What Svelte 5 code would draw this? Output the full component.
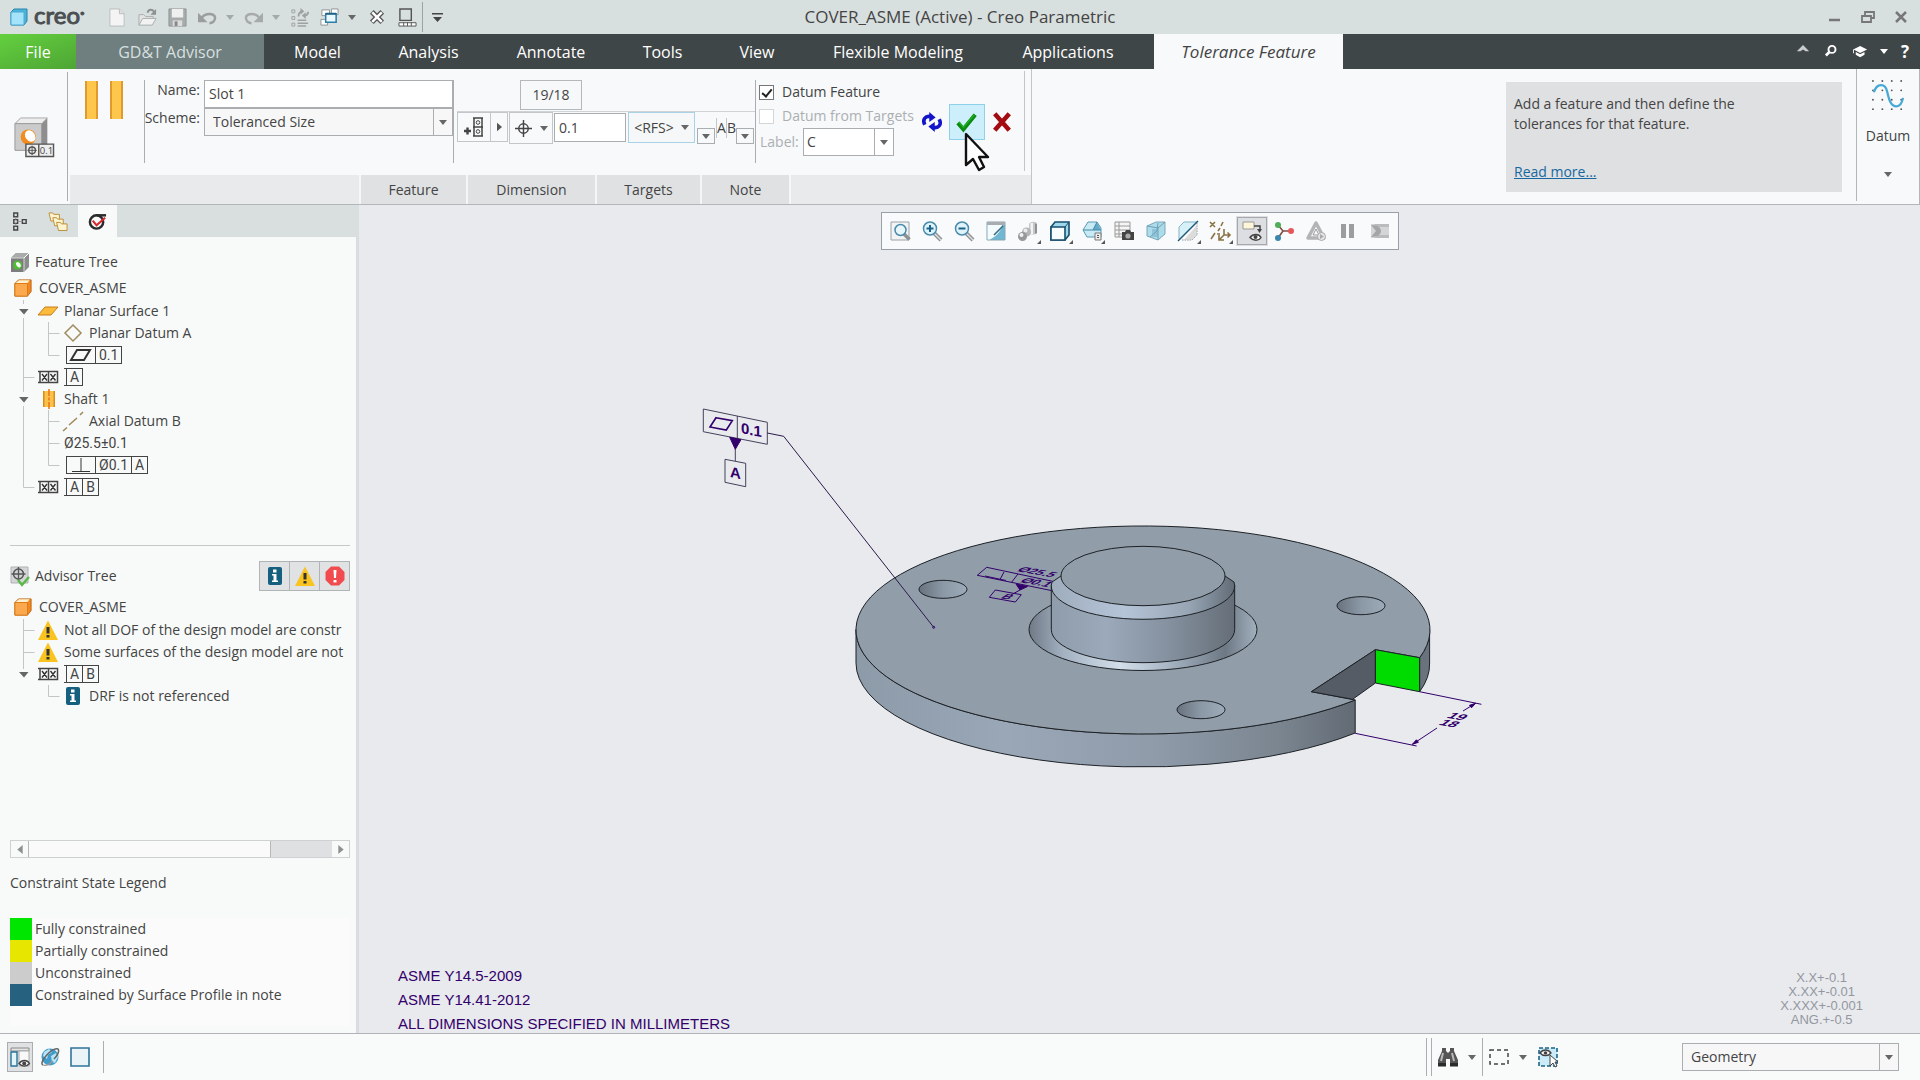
<script>
  let featureName = $state('Slot 1');
  let tolerance = $state('0.1');
  let datumFeature = $state(true);
  let fromTargets = $state(false);

  const tabs = ['Model', 'Analysis', 'Annotate', 'Tools', 'View', 'Flexible Modeling', 'Applications'];
  const subTabs = ['Feature', 'Dimension', 'Targets', 'Note'];

  // guides: v = line, t = tee, l = corner, e = expander, x = last expander, blank = nothing
  const featureRows = [
    { guides: ['e'], icon: 'plane', text: 'Planar Surface 1' },
    { guides: ['v', 't'], icon: 'diamond', text: 'Planar Datum A' },
    { guides: ['v', 'l'], frame: ['flat', '0.1'] },
    { guides: ['t'], icon: 'drf', datums: ['A'] },
    { guides: ['e'], icon: 'shaft', text: 'Shaft 1' },
    { guides: ['v', 't'], icon: 'axis', text: 'Axial Datum B' },
    { guides: ['v', 't'], plain: '25.5±0.1' },
    { guides: ['v', 'l'], frame: ['perp', 'Ø0.1', 'A'] },
    { guides: ['l'], icon: 'drf', datums: ['A', 'B'] }
  ];
  const advisorRows = [
    { guides: ['t'], icon: 'warn', text: 'Not all DOF of the design model are constr' },
    { guides: ['t'], icon: 'warn', text: 'Some surfaces of the design model are not' },
    { guides: ['x'], icon: 'drf', datums: ['A', 'B'] },
    { guides: ['', 'l'], icon: 'info', text: 'DRF is not referenced' }
  ];
  const legend = [
    ['green', 'Fully constrained'],
    ['yellow', 'Partially constrained'],
    ['grey', 'Unconstrained'],
    ['blue', 'Constrained by Surface Profile in note']
  ];
  const viewTools = [
    ['refit', 'Refit'], ['zoomin', 'Zoom in'], ['zoomout', 'Zoom out'], ['repaint', 'Repaint'],
    ['render', 'Rendering options'], ['display', 'Display style'], ['saved', 'Saved orientations'],
    ['viewmgr', 'View manager'], ['persp', 'Perspective view'], ['section', 'Sections'],
    ['datums', 'Datum display'], ['annot', 'Annotation display'], ['spin', 'Spin center'],
    ['sim', 'Simulation'], ['pause', 'Pause'], ['resume', 'Resume']
  ];
  const withMenu = ['render', 'display', 'saved', 'section', 'datums'];
</script>

{#snippet down()}
  <svg class="down" viewBox="0 0 8 5" aria-hidden="true"><path d="M0 0h8L4 5z" /></svg>
{/snippet}

{#snippet icon(name)}
  <svg class="icon" viewBox="0 0 20 20" fill="none" aria-hidden="true">
    {#if name === 'new'}
      <path d="M2 1h10l5 5v13H2z" fill="#f4f4f4" stroke="#b9bdbd" /><path d="M12 1v5h5" fill="#e0e0e0" stroke="#b9bdbd" />
    {:else if name === 'open'}
      <path d="M1 18V7h5l2 2h8v3" fill="#e4e4e4" stroke="#a9adad" /><path d="M1 18l4-7h14l-4 7z" fill="#f2f2f2" stroke="#a9adad" /><path d="M10 5c1-4 5-4 7-1" stroke="#8d9191" stroke-width="2" /><path d="M19 1v6h-6z" fill="#8d9191" />
    {:else if name === 'save'}
      <path d="M1 1h18v18H1z" fill="#a7abab" stroke="#8f9393" /><path d="M4 1h12v9H4z" fill="#efefef" /><path d="M5 13h10v6H5z" fill="#dcdcdc" /><path d="M7 14h3v5H7z" fill="#888" />
    {:else if name === 'undo'}
      <path d="M4 10c4-5 13-5 14 0 0 4-3 6-6 6" stroke="#9a9e9e" stroke-width="2.6" /><path d="M0 5v10h10z" fill="#9a9e9e" />
    {:else if name === 'redo'}
      <path d="M16 10C12 5 3 5 2 10c0 4 3 6 6 6" stroke="#a6aaaa" stroke-width="2.6" /><path d="M20 5v10H10z" fill="#a6aaaa" />
    {:else if name === 'regen'}
      <g stroke="#9da1a1"><path d="M2 2h3v3H2zM2 9h3v3H2zM2 16h3v3H2z" /><path d="M8 13h9M8 16h11M8 19h9" stroke-width="1.6" /><path d="M9 9c0-4 1-5 4-5M19 4c0 3-1 4-4 4" stroke-width="2" /></g><path d="M11 0l4 3.500-4 3.500zM16.500 4.500l-4 3.500 4 3.500z" fill="#9da1a1" />
    {:else if name === 'windows'}
      <g fill="#fff" stroke="#8e9494"><path d="M2 2h8v6H2zM12 1h7v6h-7zM1 12h7v6H1z" /></g><path d="M6 6h11v9H6z" fill="#eaf7fc" stroke="#2b7fa8" stroke-width="1.6" /><path d="M6 6h11" stroke="#1c6288" stroke-width="2" />
    {:else if name === 'closewin'}
      <path d="M4 4l11 11M15 4L4 15" stroke="#555" stroke-width="5.500" /><path d="M4.500 4.500l10 10M14.500 4.500l-10 10" stroke="#fff" stroke-width="2.600" />
    {:else if name === 'panel'}
      <path d="M2 1h12v12H2z" stroke="#555" stroke-width="1.5" /><path d="M1 15.500h18v3.500H1z" fill="#fff" stroke="#555" /><path d="M6 15v4M10 15v4M14 15v4" stroke="#555" />
    {:else if name === 'modeltree'}
      <g stroke="#444" stroke-width="1.5"><path d="M4 1h4v4H4zM4 8h4v4H4zM4 15h4v4H4zM13 8h4v4h-4z" /><path d="M6 5v3M6 12v3M8 10h5" stroke="#999" stroke-width="1" /></g>
    {:else if name === 'folders'}
      <g fill="#fdf3cf" stroke="#b98f3a"><path d="M0 1h4l1 1.500h6v7H2z" /><path d="M4 6h4l1 1.500h6v7H6z" /><path d="M8 11h4l1 1.500h6v7h-9z" /></g>
    {:else if name === 'advisor'}
      <circle cx="9" cy="10.500" r="7" stroke="#2a2a2a" stroke-width="2.600" /><path d="M9 3.500h10" stroke="#2a2a2a" stroke-width="2.600" /><path d="M5 9l4 5 9-8" stroke="#d8252c" stroke-width="2.200" />
    {:else if name === 'greycube'}
      <path d="M1 6l5-5h13v14l-5 5H1z" fill="#8b8d8d" /><path d="M1 6h13v14H1z" fill="#7c7e7e" /><path d="M1 6l5-5h13l-5 5z" fill="#a9abab" /><path d="M14 6l5-5" stroke="#fff" /><path d="M14 6v14M1 6h13" stroke="#d5d5d5" /><circle cx="7.500" cy="13" r="4.500" fill="#4fbf32" /><ellipse cx="8.500" cy="13" rx="2" ry="3" fill="#f2fff0" transform="rotate(-35 8 13)" />
    {:else if name === 'part'}
      <path d="M1 5l4-4h14v13l-4 5H1z" fill="#f5871f" stroke="#b8610f" /><path d="M1 5h14v14H1z" fill="#fba94f" stroke="#d97812" /><path d="M2 4.500L5.500 1.500h12L15 4.500z" fill="#fff0cf" />
    {:else if name === 'plane'}
      <path d="M0 14L7 6h13l-7 8z" fill="#fbbc3d" stroke="#c87a18" />
    {:else if name === 'diamond'}
      <path d="M10 2l8 8-8 8-8-8z" stroke="#a08a5f" stroke-width="1.500" />
    {:else if name === 'drf'}
      <path d="M0 4.500h19.500v11H0M2 4.500v11M10.500 4.500v11" stroke="#444" stroke-width="1.500" /><path d="M4 7l5 6.500M9 7l-5 6.500M12.500 7l5 6.500M17.500 7l-5 6.500" stroke="#333" stroke-width="1.400" />
    {:else if name === 'shaft'}
      <path d="M5 2h12v16H5z" fill="#fcc14a" /><path d="M5 2h1.500v16H5zM15.500 2H17v16h-1.500z" fill="#d98c1a" /><path d="M11 0v20" stroke="#e8781a" stroke-width="1.600" stroke-dasharray="7 1.500 3 1.500" />
    {:else if name === 'axis'}
      <path d="M0 20l4-3.500M6 14l8-7M17 4l3-3" stroke="#a08a5f" stroke-width="1.600" />
    {:else if name === 'warn'}
      <path d="M10 .5L20 20H0z" fill="#f9c320" /><path d="M8.500 7h3v6.500h-3zM8.500 15h3v2.500h-3z" fill="#333" />
    {:else if name === 'info'}
      <rect x="3" y="1" width="14" height="18" rx="2" fill="#15607f" /><path d="M8 3.500h3.500v3H8zM7 8h4.500v6.500H13V16H7v-1.500h1.500v-5H7z" fill="#fff" />
    {:else if name === 'error'}
      <path d="M6 .5h8l5.500 5.500v8L14 19.500H6L.5 14V6z" fill="#f14a4f" /><path d="M8.500 4h3l-.5 8H9zM8.500 14h3v2.500h-3z" fill="#fff" />
    {:else if name === 'advtree'}
      <path d="M1 1h17v16H1z" fill="#d3d5d6" stroke="#b0b2b3" /><circle cx="8.500" cy="8" r="5" stroke="#555" stroke-width="1.500" /><path d="M8.500 1v14M1.500 8h14" stroke="#555" stroke-width="1.300" /><path d="M8 14l4 5 7-8" stroke="#58b947" stroke-width="2.400" />
    {:else if name === 'refit'}
      <path d="M1 1h18v18H1z" fill="#f1f3f4" stroke="#9da2a6" /><path d="M14 13l5.500 5.500" stroke="#8e9295" stroke-width="3.500" /><circle cx="10.500" cy="9" r="5.500" fill="#e6f6fb" stroke="#4a8aaa" stroke-width="1.500" />
    {:else if name === 'zoomin' || name === 'zoomout'}
      <path d="M12 12l7 7" stroke="#8e9295" stroke-width="4" /><path d="M12 12l7 7" stroke="#dcdedf" stroke-width="1.500" /><circle cx="8" cy="7.500" r="6.500" fill="#dff3fa" stroke="#4a8aaa" stroke-width="1.500" /><path d="M4.500 7.500h7" stroke="#1b628a" stroke-width="2" />
      {#if name === 'zoomin'}<path d="M8 4v7" stroke="#1b628a" stroke-width="2" />{/if}
    {:else if name === 'repaint'}
      <path d="M1 1h18v18H1z" fill="#6fb7d2" stroke="#8ba5b2" /><path d="M1.500 4H16c0 5-5 11-12 14.500H1.500z" fill="#f4fbfd" /><path d="M1 1h18v3H1z" fill="#a7adb1" /><path d="M8 14l9-9" stroke="#3c6a82" stroke-width="1.600" />
    {:else if name === 'render'}
      <path d="M11 3c1-3 8-3 8 0v9c-2 2-6 2-8 0z" fill="#c4c6c7" /><path d="M17 2.500c2 0 2 1 2 1.500v8l-2 1z" fill="#8f9192" /><path d="M12.500 2h2.500v11h-2.500z" fill="#f4f4f4" /><circle cx="8.500" cy="11" r="4.500" fill="#b3b5b6" /><circle cx="7.500" cy="9.500" r="2" fill="#ececec" /><circle cx="4.500" cy="15.500" r="4.500" fill="#96989a" /><circle cx="3.500" cy="14" r="2" fill="#f2f2f2" />
    {:else if name === 'display'}
      <path d="M1 6l4-5h14v13l-4 5H1z" fill="#9fd8ea" stroke="#174e6d" stroke-width="1.600" /><path d="M1 6h14v13H1z" fill="#f7fcfe" stroke="#174e6d" stroke-width="1.600" /><path d="M15 6l4-5" stroke="#174e6d" />
    {:else if name === 'saved'}
      <path d="M1 9l5-8h9l4 6v9H5z" fill="#c7eaf5" stroke="#5a9ab5" /><path d="M15 1l4 8h-8z" fill="#63a9c8" /><path d="M1 9h18M11 9l4-8" stroke="#4389a6" /><path d="M13 12h6v7h-6z" fill="#eee" stroke="#777" /><path d="M15 14h2v1h-2zM15 16h2v1h-2z" fill="#555" />
    {:else if name === 'viewmgr'}
      <path d="M1 1h15v15H1z" fill="#f5f5f5" stroke="#999" /><path d="M1 5h15M1 9h15M1 13h10M5 1v15" stroke="#999" /><path d="M8 11h3l1-2h4l1 2h3v8H8z" fill="#444" /><circle cx="14" cy="15" r="2.600" fill="#aaa" />
    {:else if name === 'persp'}
      <path d="M1 5l9-4h9v12l-7 6-11-4z" fill="#acdbea" stroke="#7aa9bd" /><path d="M1 5l11 2v12M12 7l7-6M4 16l7-6 1-8" stroke="#6f9eb3" /><path d="M6 8h6v8H6z" fill="#6faac2" opacity=".5" />
    {:else if name === 'section'}
      <path d="M1 6l5-5h13L2 18H1z" fill="#d6f1f8" stroke="#86b5c6" /><path d="M19 2v12l-5 5H3" stroke="#999" stroke-dasharray="1.500 1" /><path d="M6 19l13-15v10l-5 5z" fill="#c8c8c8" opacity=".6" /><path d="M0 20L20 0" stroke="#1c5878" stroke-width="1.500" />
    {:else if name === 'datums'}
      <g stroke="#8b7346" stroke-width="1.600"><path d="M0 1l5 5M5 1L0 6M13 1l-2 4M10 7l-2 3M5 12l-4 6M7 13h3M14 8v6h6M14 14l-5 5M17.500 11.500L20 14l-2.500 2.500M9 14v5h5" /></g>
    {:else if name === 'annot'}
      <path d="M1 1h11v7H1z" fill="#fff6d8" stroke="#999" /><path d="M12 5h6v4" stroke="#444" stroke-width="1.500" /><path d="M15 8h5l-2.500 4z" fill="#444" /><path d="M8 16.500c3-4 9-4 11 0-2 3.500-8 3.500-11 0z" fill="#fff" stroke="#444" stroke-width="1.500" /><circle cx="13.500" cy="16" r="2" fill="#444" />
    {:else if name === 'spin'}
      <path d="M4 4l5 6h8M9 10l-5 7" stroke="#7d4d44" stroke-width="1.600" /><circle cx="4" cy="4" r="3" fill="#4fae57" /><circle cx="17" cy="10" r="3" fill="#e5575b" /><circle cx="4" cy="17" r="3" fill="#3a86ad" />
    {:else if name === 'sim'}
      <path d="M10 2l8 15H2z" stroke="#b2b4b5" stroke-width="3.500" stroke-linejoin="round" /><path d="M10 8l3 6H7z" stroke="#999" /><circle cx="15.500" cy="15.500" r="4" fill="#e6e6e6" stroke="#aaa" /><path d="M14 13l4 2.500-4 2.500z" fill="#aaa" />
    {:else if name === 'pause'}
      <path d="M3 3h5v14H3zM11 3h5v14h-5z" fill="#9b9d9e" />
    {:else if name === 'resume'}
      <path d="M1 3h18v14H1z" fill="#d3d5d6" /><path d="M4 3h15v3H7zM4 17h15v-3H8z" fill="#b9bbbc" /><path d="M1 4c7 0 10 3 10 6s-3 6-10 6l5-6z" fill="#a3a5a6" />
    {:else if name === 'navpane'}
      <path d="M1 1h18v3H1z" fill="#e5e5e5" stroke="#888" /><path d="M9 4h10v15H9z" fill="#f8f8f8" stroke="#aaa" /><path d="M1 5h6v14H1z" fill="#e2f5fb" stroke="#2c7397" stroke-width="1.400" /><path d="M9 16.500c3-4 8-4 10.500 0-3 3.500-7.500 3.500-10.500 0z" fill="#fff" stroke="#444" stroke-width="1.300" /><circle cx="14.200" cy="16.500" r="2" fill="#444" />
    {:else if name === 'globe'}
      <circle cx="10" cy="10" r="8.500" fill="#3f9ccb" /><path d="M4 5l5-3 3 3-4 3-1 4-4-3zM11 9l5-3 2 4-3 6-3-1z" fill="#b9e4f4" /><path d="M3 18C-2 16 12 0 18 2c2 2-1 7-4 10" stroke="#666" stroke-width="1.500" /><path d="M3 18c3 1 7-1 10-4" stroke="#999" stroke-width="1.300" />
    {:else if name === 'square'}
      <path d="M1 1h18v18H1z" fill="#eaf3f8" stroke="#30749a" stroke-width="1.600" />
    {:else if name === 'find'}
      <path d="M4 1h4v3l2 2 2-2V1h4v3l4 9v6h-8v-7H8v7H0v-6l4-9z" fill="#555" /><path d="M5 6L3 14M14 6l2 8" stroke="#b9b9b9" stroke-width="2" /><path d="M0 16h8v3.500H0zM12 16h8v3.500h-8z" fill="#2b2b2b" />
    {:else if name === 'marquee'}
      <path d="M1 3h18v14H1z" stroke="#444" stroke-width="1.500" stroke-dasharray="4 3" />
    {:else if name === 'pick'}
      <path d="M1 1h18v18H1z" fill="#c9ecf8" stroke="#1d6487" stroke-width="1.600" stroke-dasharray="4 2" /><path d="M2 6c3-4 8-4 11 0-3 3.500-8 3.500-11 0z" fill="#fff" stroke="#444" stroke-width="1.300" /><circle cx="7.500" cy="6" r="1.800" fill="#444" /><path d="M12 8v11l3-3 2 4 2-1-2-4h3z" fill="#fff" stroke="#444" />
    {/if}
  </svg>
{/snippet}

{#snippet tree(rows)}
  <ul class="tree">
    {#each rows as row}
      <li class="row">
        {#each row.guides as g}
          <svg class="guide" viewBox="0 0 25 22" fill="none" aria-hidden="true">
            {#if g === 'v'}<path d="M12.500 0v22" />{/if}
            {#if g === 't'}<path d="M12.500 0v22M12.500 11.500h11" />{/if}
            {#if g === 'l'}<path d="M12.500 0v11.500h11" />{/if}
            {#if g === 'e'}<path d="M12.500 0v4M12.500 18v4" />{/if}
            {#if g === 'x'}<path d="M12.500 0v6" />{/if}
            {#if g === 'e' || g === 'x'}<path class="arrow" d="M8 9h9.500l-4.500 5.500z" />{/if}
          </svg>
        {/each}
        {#if row.icon}<span class="ricon">{@render icon(row.icon)}</span>{/if}
        {#if row.text}<span>{row.text}</span>{/if}
        {#if row.plain}<span class="plain">Ø{row.plain}</span>{/if}
        {#if row.datums}
          <span class="fcf open">{#each row.datums as d}<span>{d}</span>{/each}</span>
        {/if}
        {#if row.frame}
          <span class="fcf framed">
            {#each row.frame as f}
              <span>
                {#if f === 'flat'}<svg class="sym" viewBox="0 0 22 14"><path d="M1 12L7 2h13l-6 10z" /></svg>
                {:else if f === 'perp'}<svg class="sym thin" viewBox="0 0 22 14"><path d="M2 13.500h18M11 0v13.500" /></svg>
                {:else}{f}{/if}
              </span>
            {/each}
          </span>
        {/if}
      </li>
    {/each}
  </ul>
{/snippet}

<div class="app">
  <header class="titlebar">
    <div class="quick">
      <span class="brand">
        <svg class="cube" viewBox="0 0 18 18" aria-hidden="true"><path d="M1 4l3-3h13v12l-3 4H1z" fill="#4bb4dc" stroke="#2784ad" /><path d="M1 4h13v13H1z" fill="#a5e3fb" stroke="#4ca9cf" /></svg>
        <span class="word">creo<sup>•</sup></span>
      </span>
      <button aria-label="New">{@render icon('new')}</button>
      <button aria-label="Open">{@render icon('open')}</button>
      <button aria-label="Save">{@render icon('save')}</button>
      <button aria-label="Undo">{@render icon('undo')}</button>
      <button class="slim dim" aria-label="Undo list">{@render down()}</button>
      <button aria-label="Redo">{@render icon('redo')}</button>
      <button class="slim dim" aria-label="Redo list">{@render down()}</button>
      <button aria-label="Regenerate">{@render icon('regen')}</button>
      <button aria-label="Windows">{@render icon('windows')}</button>
      <button class="slim" aria-label="Window list">{@render down()}</button>
      <button class="shut" aria-label="Close window">{@render icon('closewin')}</button>
      <button class="pan" aria-label="Panels">{@render icon('panel')}</button>
      <button class="custom" aria-label="Customize toolbar"><svg viewBox="0 0 11 9" aria-hidden="true"><path d="M0 0h11v1.500H0zM1 4h9L5.500 9z" /></svg></button>
    </div>
    <h1>COVER_ASME (Active) - Creo Parametric</h1>
    <div class="winbtns">
      <button aria-label="Minimize"><svg viewBox="0 0 14 14"><path d="M1 10h11" stroke-width="2.500" /></svg></button>
      <button aria-label="Restore"><svg viewBox="0 0 14 14"><path d="M4 5V2h9v6h-3M1 6h9v6H1z" stroke-width="1.800" /></svg></button>
      <button aria-label="Close"><svg viewBox="0 0 14 14"><path d="M2 2l10 10M12 2L2 12" stroke-width="2.500" /></svg></button>
    </div>
  </header>

  <nav class="tabs">
    <button class="file">File</button>
    <button class="advisor">GD&amp;T Advisor</button>
    {#each tabs as t}<button>{t}</button>{/each}
    <span></span>
    <button class="active">Tolerance Feature</button>
    <span></span>
    <div class="helpers">
      <button aria-label="Collapse ribbon"><svg viewBox="0 0 16 16"><path d="M1 7l7-7 7 7h-4l-3-2-3 2z" fill="#c9cdcd" /></svg></button>
      <button aria-label="Search"><svg viewBox="0 0 16 16" fill="none" stroke="#fff"><circle cx="8" cy="5" r="4" stroke-width="2.200" /><path d="M5 8l-4 4" stroke-width="3" /></svg></button>
      <button aria-label="Learning"><svg viewBox="0 0 16 16" fill="#fff"><path d="M7 1l8 4-8 4-7-3.500v4H-1V5zM2 8l5 2.500L12 8v3l-5 3-5-3z" /></svg></button>
      <button class="slim" aria-label="Learning list">{@render down()}</button>
      <button class="q" aria-label="Help">?</button>
    </div>
  </nav>

  <section class="ribbon">
    <button class="typebtn" aria-label="Geometric tolerance feature">
      <svg viewBox="0 0 42 42" aria-hidden="true">
        <path d="M1 7l6-6h28v28l-6 6H1z" fill="#8e8e8e" /><path d="M1 7l6-6h28l-6 6z" fill="#ededed" stroke="#aaa" /><path d="M1 7h28v28H1z" fill="#cbcbcb" stroke="#9a9a9a" />
        <circle cx="15" cy="21" r="8" fill="#f28c1c" /><ellipse cx="17" cy="20" rx="5" ry="6.500" fill="#fff" transform="rotate(-35 17 20)" />
        <path d="M12.500 28.500h29v13h-29zM26 28.500v13" fill="#eee" stroke="#555" stroke-width="1.500" /><circle cx="19" cy="35" r="3.500" fill="none" stroke="#555" stroke-width="1.500" /><path d="M19 30v10M14 35h10" stroke="#555" /><text x="27" y="39" font-size="10" fill="#444">0.1</text>
      </svg>
    </button>
    <div class="dash">
      <div class="controls">
        <div class="slot" aria-hidden="true"><i></i><i></i></div>
        <div class="naming">
          <label for="fname">Name:</label>
          <input id="fname" class="box" bind:value={featureName} />
          <label for="scheme">Scheme:</label>
          <div class="combo">
            <select id="scheme"><option>Toleranced Size</option></select>{@render down()}
          </div>
        </div>
        <div class="tol">
          <button class="dimval">19/18</button>
          <div class="line">
            <div class="pair">
              <button class="add" aria-label="Add tolerance frame"><svg viewBox="0 0 20 20" fill="none" stroke="#444"><path d="M9 1h10M9 10h10M9 19h10M10 1v18M18 1v18" stroke-width="1.500" /><circle cx="14" cy="5.500" r="1.800" /><circle cx="14" cy="14.500" r="1.800" /><path d="M0 14h7M3.500 10.500v7" stroke-width="2.400" /></svg></button>
              <button class="next" aria-label="More frames"><svg viewBox="0 0 6 10"><path d="M0 0v10l6-5z" /></svg></button>
            </div>
            <button class="symbol" aria-label="Position"><svg viewBox="0 0 18 18" fill="none" stroke="#444" stroke-width="1.500"><circle cx="9" cy="9" r="5" /><path d="M9 0v18M0 9h18" /></svg>{@render down()}</button>
            <input class="box val" aria-label="Tolerance value" bind:value={tolerance} />
            <button class="rfs">&lt;RFS&gt; {@render down()}</button>
            <button class="mini" aria-label="Modifiers">{@render down()}</button>
            <span class="ab"><span>A</span><span>B</span></span>
            <button class="mini" aria-label="Datum references">{@render down()}</button>
          </div>
        </div>
        <div class="datum">
          <label><input type="checkbox" bind:checked={datumFeature} />Datum Feature</label>
          <label class="off"><input type="checkbox" bind:checked={fromTargets} disabled />Datum from Targets</label>
          <div class="lbl">
            <label class="off" for="dlabel">Label:</label>
            <div class="combo white"><select id="dlabel"><option>C</option></select>{@render down()}</div>
          </div>
        </div>
        <div class="confirm">
          <button aria-label="Repeat"><svg viewBox="0 0 24 22" fill="none" stroke="#1414c8" stroke-width="4"><path d="M4 14C1 8 5 4 10 5" /><path d="M20 8c3 6-1 10-6 9" /><path d="M9 0l7 6-7 5zM15 22l-7-6 7-5z" fill="#1414c8" stroke="none" /></svg></button>
          <button class="ok" aria-label="OK">
            <svg viewBox="0 0 24 22" fill="none"><path d="M2 12l6 7L21 3" stroke="#0a8a10" stroke-width="4.500" /><path d="M3 11l5 6L20 3" stroke="#1fae1f" stroke-width="1.500" /></svg>
            <svg class="cursor" viewBox="0 0 26 40" aria-hidden="true"><path d="M2 2v31l7-6 6 11 5-3-5-10h9z" fill="#fff" stroke="#111" stroke-width="2.400" stroke-linejoin="round" /></svg>
          </button>
          <button aria-label="Cancel"><svg viewBox="0 0 24 22" fill="none" stroke="#a30d12" stroke-width="5"><path d="M4 2l16 18M20 2L4 20" /></svg></button>
        </div>
      </div>
      <div class="subtabs">{#each subTabs as s}<button>{s}</button>{/each}</div>
    </div>
    <div class="rest">
      <aside class="hint">
        <p>Add a feature and then define the tolerances for that feature.</p>
        <a href="#more">Read more...</a>
      </aside>
    </div>
    <button class="datumbtn">
      <svg class="wave" viewBox="0 0 34 34" fill="none" aria-hidden="true">
        <g fill="#555">{#each [1, 11, 21, 31] as x}{#each [1, 11, 21, 31] as y}<circle cx={x} cy={y} r="1" />{/each}{/each}</g>
        <path d="M2 13C5 3 14 3 16 12s4 16 10 16c4 0 6-4 7-9" stroke="#46a9d6" stroke-width="2.400" />
      </svg>
      <span>Datum</span>
      {@render down()}
    </button>
  </section>

  <main>
    <aside class="side">
      <div class="ptabs">
        <button aria-label="Model tree">{@render icon('modeltree')}</button>
        <button aria-label="Folder browser">{@render icon('folders')}</button>
        <button class="on" aria-label="GD&amp;T Advisor tree">{@render icon('advisor')}</button>
      </div>
      <div class="pane">
        <div class="feature">
          <h2>{@render icon('greycube')}Feature Tree</h2>
          <div class="root">{@render icon('part')}COVER_ASME</div>
          {@render tree(featureRows)}
        </div>
        <div class="advise">
          <div class="ahead">
            <h2>{@render icon('advtree')}Advisor Tree</h2>
            <div class="filters">
              <button aria-label="Information">{@render icon('info')}</button>
              <button aria-label="Warnings">{@render icon('warn')}</button>
              <button aria-label="Errors">{@render icon('error')}</button>
            </div>
          </div>
          <div class="root">{@render icon('part')}COVER_ASME</div>
          {@render tree(advisorRows)}
        </div>
        <div class="scroll">
          <button aria-label="Scroll left"><svg viewBox="0 0 6 10"><path d="M6 0v10L0 5z" /></svg></button>
          <div class="thumb"></div>
          <button aria-label="Scroll right"><svg viewBox="0 0 6 10"><path d="M0 0v10l6-5z" /></svg></button>
        </div>
        <h2 class="ltitle">Constraint State Legend</h2>
        <ul class="legend">
          {#each legend as [c, t]}<li><i class={c}></i>{t}</li>{/each}
        </ul>
      </div>
    </aside>

    <div class="canvas">
      <svg class="model" viewBox="359 205 1561 828" preserveAspectRatio="xMidYMid meet" role="img" aria-label="Cover model">
        <defs>
          <linearGradient id="rim"><stop offset="0" stop-color="#8d9aa8" /><stop offset=".3" stop-color="#9aa7b7" /><stop offset=".6" stop-color="#8f9ba9" /><stop offset=".85" stop-color="#7a8590" /><stop offset="1" stop-color="#626a74" /></linearGradient>
          <linearGradient id="boss"><stop offset="0" stop-color="#8f9cab" /><stop offset=".3" stop-color="#9ba9ba" /><stop offset=".65" stop-color="#84909e" /><stop offset="1" stop-color="#656e78" /></linearGradient>
          <linearGradient id="chamfer"><stop offset="0" stop-color="#9eadbd" /><stop offset=".4" stop-color="#b6c4d8" /><stop offset=".75" stop-color="#97a5b4" /><stop offset="1" stop-color="#626c77" /></linearGradient>
          <linearGradient id="hole"><stop offset="0" stop-color="#68727e" /><stop offset=".5" stop-color="#8b98a5" /><stop offset="1" stop-color="#9dabba" /></linearGradient>
          <linearGradient id="groove"><stop offset="0" stop-color="#6f7a86" /><stop offset=".15" stop-color="#a3b1c1" /><stop offset=".4" stop-color="#d3deea" /><stop offset=".6" stop-color="#a9b7c6" /><stop offset=".86" stop-color="#6d7884" /><stop offset="1" stop-color="#a2b1be" /></linearGradient>
        </defs>
        <g stroke="#1d2126" stroke-width="1">
          <path d="M856 629.500V663A287 104 0 0 0 1355.200 733V700A287 104 0 0 1 856 629.500z" fill="url(#rim)" />
          <path d="M1429.600 629.500V663A287 104 0 0 1 1419.600 691.700V657.700A287 104 0 0 0 1429.600 629.500z" fill="#69727d" />
          <path d="M1419.600 657.700A287 104 0 1 0 1355.200 700L1311.400 691.700 1375.400 649.700z" fill="#919eaa" />
          <path d="M1375.400 649.700L1311.400 691.700 1352.600 699.300 1375.400 683z" fill="#565c66" />
          <path d="M1375.400 649.700L1419.600 657.700V691.700L1375.400 683z" fill="#00dc00" />
          <ellipse cx="943" cy="589.300" rx="24" ry="9" fill="url(#hole)" />
          <ellipse cx="1361" cy="605.700" rx="24" ry="9" fill="url(#hole)" />
          <ellipse cx="1201" cy="709.700" rx="24" ry="9" fill="url(#hole)" />
          <ellipse cx="1143" cy="629.500" rx="114" ry="41" fill="url(#groove)" />
        </g>
        <g class="note3d">
          <path d="M986.700 567.300L1056 582M977.300 575.300L1056 591.500M986.700 567.300L977.300 575.300M1018 574L1011.500 582.300M1004 572L1000 579.500M985 576L1006 580.500" />
          <path d="M1016 584L1027.500 586.500 1020 590z" fill="#33006b" /><path d="M1020 590L1011 595M995.300 590L1021.300 594.700 1015.300 602 989.300 597.300z" />
          <text transform="matrix(1 .18 -.8 .5 1016 571)" font-size="13">Ø25.5</text>
          <text transform="matrix(1 .18 -.8 .5 1019 582)" font-size="13">Ø0.1</text>
          <text transform="matrix(1 .18 -.8 .5 1000 598)" font-size="12">B</text>
        </g>
        <g stroke="#1d2126" stroke-width="1">
          <path d="M1051.300 585V629.500A91.700 33.200 0 0 0 1234.700 629.500V585z" fill="url(#boss)" />
          <path d="M1061 576L1052 582A91.700 33.200 0 1 0 1234 582L1225 576z" fill="url(#chamfer)" />
          <ellipse cx="1143" cy="576" rx="82" ry="29.700" fill="#919eaa" />
        </g>
        <g class="note3d">
          <g stroke="#45405a">
            <path d="M703.300 409L767.300 422.300V444.300L703.300 431.700zM737.300 416V438.300" />
            <path d="M735.300 449V461M725 459.300L745.700 463.300V486.700L725 482.300z" />
          </g>
          <path d="M716 417.700L732.300 420.600 726.300 430 710 427z" stroke-width="1.600" />
          <path d="M729.700 437.300L741 439.600 735.300 449.300z" fill="#33006b" />
          <path d="M767.300 433L783.700 436.300 933.700 627.300" stroke="#2b1a48" /><circle cx="933.700" cy="627.300" r="1" />
          <text transform="matrix(1 .2 0 1 741 433)" font-size="15">0.1</text>
          <text transform="matrix(1 .2 0 1 730 477)" font-size="15">A</text>
          <path d="M1419.600 691.700L1481.400 704.300M1355.200 733.300L1416.600 746M1475.500 703.300L1463 711M1437 728L1412.400 744.300" />
          <path d="M1475.500 703.300l-6 2 2 2.500zM1412.400 744.300l6-2-2-2.500z" fill="#33006b" />
          <text transform="matrix(1 .18 -.7 .5 1454 719)" font-size="15" text-anchor="middle">19</text>
          <text transform="matrix(1 .18 -.7 .5 1446 726)" font-size="15" text-anchor="middle">18</text>
        </g>
      </svg>
      <div class="gtools" role="toolbar" aria-label="Graphics">
        {#each viewTools as [n, label]}
          <button aria-label={label} class:pressed={n === 'annot'} class:menu={withMenu.includes(n)}>{@render icon(n)}</button>
        {/each}
      </div>
      <div class="notes">
        <div class="std"><p>ASME Y14.5-2009</p><p>ASME Y14.41-2012</p><p>ALL DIMENSIONS SPECIFIED IN MILLIMETERS</p></div>
        <div class="defs"><p>X.X+-0.1</p><p>X.XX+-0.01</p><p>X.XXX+-0.001</p><p>ANG.+-0.5</p></div>
      </div>
    </div>
  </main>

  <footer>
    <button class="tog" aria-label="Navigator">{@render icon('navpane')}</button>
    <button aria-label="Browser">{@render icon('globe')}</button>
    <button aria-label="Full screen">{@render icon('square')}</button>
    <span class="bar"></span>
    <span class="fill"></span>
    <span class="bar dbl"></span>
    <button class="split" aria-label="Find">{@render icon('find')}{@render down()}</button>
    <span class="bar tight"></span>
    <button class="split" aria-label="Selection box">{@render icon('marquee')}{@render down()}</button>
    <button class="pick" aria-label="Pick from visible">{@render icon('pick')}</button>
    <div class="combo filter"><select aria-label="Selection filter"><option>Geometry</option></select>{@render down()}</div>
  </footer>
</div>

<style>
  :global(body) { margin: 0; }
  .app { min-height: 100vh; display: flex; flex-direction: column; background: #f7f9fa; color: #444; font: 14px/20px "Open Sans", "Noto Sans", sans-serif; }
  .app :is(button, input, select) { font: inherit; color: inherit; box-sizing: border-box; }
  button { border: 0; background: none; padding: 0; margin: 0; display: flex; align-items: center; justify-content: center; }
  h1, h2, p, ul { margin: 0; padding: 0; font: inherit; }
  ul { list-style: none; }
  svg { display: block; flex: none; overflow: visible; }
  .icon { width: 20px; height: 20px; }
  .down { width: 8px; height: 5px; fill: #666; }

  .titlebar { display: grid; grid-template-columns: 1fr auto 1fr; align-items: center; height: 34px; background: #d8dfdf; }
  .titlebar h1 { font-size: 17px; }
  .quick { display: flex; align-items: center; }
  .quick button { width: 30px; height: 30px; }
  .quick .icon { width: 19px; height: 19px; }
  .quick .slim { width: 16px; }
  .quick .dim .down { fill: #a5a9a9; }
  .quick .shut { width: 34px; }
  .quick .pan { width: 26px; }
  .quick .custom { border-left: 1px solid #9da2a2; margin-left: 2px; }
  .custom svg { width: 11px; height: 9px; fill: #444; }
  .brand { display: flex; align-items: center; gap: 6px; padding-left: 10px; width: 92px; }
  .cube { width: 18px; height: 18px; }
  .word { font: 24px/28px Lato, sans-serif; margin-top: -4px; color: #4a4f50; -webkit-text-stroke: 1px #4a4f50; }
  .word sup { font-size: 8px; line-height: 8px; vertical-align: 8px; }
  .winbtns { display: flex; justify-content: flex-end; gap: 19px; padding-right: 12px; }
  .winbtns svg { width: 14px; height: 14px; fill: none; stroke: #777; }

  .tabs { display: grid; grid-template-columns: 76px 188px 107px 115px 130px 93px 96px 186px 154px 9px 189px 1fr auto; height: 35px; background: #3f4647; color: #fff; font-size: 16px; }
  .tabs .file { background: linear-gradient(160deg, #63d03f, #4ea534); }
  .tabs .advisor { background: #6f7e7e; color: #d8e0e0; }
  .tabs .active { background: #f7f9fa; color: #444; font-style: italic; font-size: 17px; }
  .helpers { display: flex; align-items: center; padding-right: 3px; }
  .helpers button { width: 29px; height: 30px; }
  .helpers svg { width: 14px; height: 14px; }
  .helpers .slim { width: 18px; }
  .helpers .down { width: 8px; height: 5px; fill: #fff; }
  .helpers .q { width: 24px; font-weight: 700; font-size: 17px; }

  .ribbon { display: grid; grid-template-columns: 68px 964px 1fr 63px; height: 135px; background: #f7f9fb; border-bottom: 1px solid #b1b6b8; }
  .typebtn { border-right: 1px solid #a9aeb1; margin: 3px 0; }
  .typebtn svg { width: 40px; height: 40px; }
  .dash { display: flex; flex-direction: column; justify-content: space-between; border-right: 1px solid #c2c6c8; padding-left: 2px; }
  .controls { display: flex; height: 94px; }
  .slot { display: flex; gap: 12px; width: 59px; padding: 12px 0 0 15px; }
  .slot i { width: 9px; height: 38px; background: #ffc64c; border: solid #e09a30; border-width: 0 2px; }
  .naming { display: grid; grid-template-columns: 59px 1fr; grid-auto-rows: 28px; align-content: start; width: 310px; margin-top: 11px; border: solid #abaeb0; border-width: 0 1px; box-sizing: border-box; }
  .naming label { text-align: right; padding-right: 4px; white-space: nowrap; justify-self: end; }
  .box { border: 1px solid #abaeb0; background: #fff; padding: 0 4px; min-width: 0; width: 100%; outline: none; border-radius: 0; }
  .combo { position: relative; display: flex; border: 1px solid #abaeb0; background: #f7f7f8; box-sizing: border-box; height: 28px; }
  .combo select { appearance: none; border: 0; background: linear-gradient(#abaeb0, #abaeb0) no-repeat right 18px top / 1px 100%; padding: 0 20px 0 8px; width: 100%; border-radius: 0; }
  .combo .down { position: absolute; right: 5px; top: 11px; pointer-events: none; }
  .white { background: #fff; }
  .white select { padding-left: 3px; }
  .tol { display: flex; flex-direction: column; width: 302px; margin-top: 11px; padding-left: 3px; box-sizing: border-box; border-right: 1px solid #abaeb0; }
  .dimval { width: 62px; height: 30px; border: 1px solid #b5b8ba; margin-left: 63px; background: #f7f8f9; }
  .line { display: flex; margin-top: 1px; border-top: 1px solid #d0d3d5; height: 32px; }
  .pair { display: flex; border: 1px solid #c4c7c9; height: 30px; box-sizing: border-box; }
  .add { width: 33px; border-right: 1px solid #c4c7c9; }
  .add svg { width: 20px; height: 20px; }
  .next { width: 16px; }
  .next svg { width: 5px; height: 10px; fill: #555; }
  .symbol { width: 44px; gap: 8px; border: 1px solid #c4c7c9; margin-left: 1px; }
  .symbol svg:first-child { width: 17px; height: 17px; }
  .val { width: 72px; height: 29px; margin: 1px 2px 0 1px; }
  .rfs { width: 67px; height: 31px; gap: 7px; border: 1px solid #a9d2e6; background: #f5f7f8; white-space: nowrap; }
  .mini { width: 18px; height: 16px; border: 1px solid #abaeb0; align-self: flex-end; margin-left: 2px; }
  .ab { display: flex; align-items: center; padding-left: 1px; }
  .ab span { border-left: 1px solid #c4c7c9; width: 9px; text-align: center; }
  .ab + .mini { margin-left: 0; }
  .datum { display: flex; flex-direction: column; padding: 11px 0 0 3px; width: 159px; }
  .datum label { display: flex; align-items: center; gap: 8px; height: 24px; white-space: nowrap; }
  .datum .off { color: #acafb1; }
  .datum input { appearance: none; margin: 0; width: 15px; height: 15px; border: 1px solid #777; background: #fff; flex: none; }
  .datum input:disabled { border-color: #d3d6d8; }
  .datum input:checked::after { content: ""; display: block; width: 4px; height: 8px; margin: 1px 0 0 4px; border: solid #222; border-width: 0 2px 2px 0; transform: rotate(40deg); }
  .lbl { display: flex; align-items: center; gap: 5px; padding-left: 1px; }
  .lbl label { width: 38px; }
  .lbl .combo { width: 91px; }
  .confirm { display: flex; align-items: center; gap: 3px; padding-top: 2px; flex: 1; border-right: 1px solid #c2c6c8; margin: 2px 6px -8px 0; }
  .confirm button { width: 28px; height: 36px; }
  .confirm svg { width: 22px; height: 20px; }
  .confirm .ok { width: 36px; position: relative; background: #cdeffb; border: 1px solid #8fd0ea; }
  .confirm .cursor { position: absolute; left: 14px; top: 27px; width: 26px; height: 40px; z-index: 2; }
  .subtabs { display: grid; grid-template-columns: 107px 129px 105px 91px; padding-left: 289px; height: 29px; background: #e8eaeb; }
  .subtabs button { background: #dfe1e3; border-left: 2px solid #f4f6f7; }
  .subtabs button:last-child { border-right: 2px solid #f4f6f7; }
  .rest { display: flex; justify-content: flex-end; align-items: flex-start; padding: 13px 14px 0 0; border-right: 1px solid #b1b6b8; margin: 0 0 3px; }
  .hint { width: 336px; height: 110px; box-sizing: border-box; background: #dfe0e2; padding: 12px 80px 10px 8px; display: flex; flex-direction: column; justify-content: space-between; }
  .hint a { color: #1668a0; }
  .datumbtn { flex-direction: column; justify-content: flex-start; padding-top: 11px; border-right: 1px solid #b1b6b8; }
  .datumbtn span { margin: 14px 0 26px; }
  .wave { width: 32px; height: 32px; }

  main { flex: 1; display: flex; min-height: 0; }
  .side { width: 359px; flex: none; box-sizing: border-box; border-right: 3px solid #d8dedf; background: #f8faf9; display: flex; flex-direction: column; }
  .ptabs { display: flex; height: 32px; background: #d8dfde; margin-right: -3px; }
  .ptabs button { width: 39px; }
  .ptabs .icon { width: 19px; height: 19px; }
  .ptabs .on { background: #f8faf9; }
  .pane { flex: 1; display: flex; flex-direction: column; padding: 11px 6px 0 10px; }
  .feature { height: 297px; border-bottom: 1px solid #c5c8c8; }
  h2 { display: flex; align-items: center; gap: 5px; height: 27px; }
  .root { display: flex; align-items: center; gap: 7px; height: 25px; padding-left: 4px; }
  .root .icon { width: 18px; height: 18px; }
  .row { display: flex; align-items: center; height: 22px; padding-left: 1px; white-space: nowrap; }
  .guide { width: 25px; height: 22px; stroke: #c3c6c6; }
  .guide .arrow { fill: #666; stroke: none; }
  .ricon { margin: 0 6px 0 2px; }
  .ricon .icon { width: 20px; height: 20px; }
  .fcf { display: flex; border: 1px solid #444; height: 18px; box-sizing: border-box; font: 14px/16px Roboto, sans-serif; }
  .fcf > span { padding: 0 3px; border-left: 1px solid #444; display: flex; align-items: center; }
  .framed { margin-left: 5px; }
  .framed > span:first-child { border-left: 0; }
  .open { padding-left: 2px; border-left: 0; }
  .sym { width: 22px; height: 14px; fill: none; stroke: #333; stroke-width: 2; }
  .sym.thin { stroke-width: 1; }
  .plain { font-family: Roboto, sans-serif; margin-left: 3px; }
  .advise { height: 279px; padding-top: 12px; }
  .ahead { display: flex; justify-content: space-between; align-items: center; height: 36px; }
  .filters { display: flex; }
  .filters button { width: 31px; height: 30px; border: 1px solid #b1b4b5; background: #e0e2e3; margin-left: -1px; }
  .scroll { display: flex; height: 18px; box-sizing: border-box; border: 1px solid #ced1d1; background: #dfe0e2; justify-content: space-between; margin-top: 3px; }
  .scroll button { width: 17px; background: #f8faf9; }
  .scroll svg { width: 6px; height: 9px; fill: #8d9090; }
  .thumb { flex: 0 1 243px; background: #fafafa; border: solid #b5b8b8; border-width: 0 1px; box-sizing: border-box; margin-right: auto; }
  .ltitle { margin-top: 11px; }
  .legend { background: #fbfbfb; margin: 22px 0 0; padding-bottom: 20px; }
  .legend li { display: flex; align-items: center; gap: 3px; height: 22px; }
  .legend i { width: 22px; height: 22px; }
  .green { background: #00e600; }
  .yellow { background: #e6e600; }
  .grey { background: #ccc; }
  .blue { background: #26627f; }

  .canvas { position: relative; flex: 1; min-width: 0; background: #e8eaee; display: flex; flex-direction: column; justify-content: space-between; }
  .model { position: absolute; inset: 0; width: 100%; height: 100%; }
  .note3d { fill: none; stroke: #33006b; stroke-width: 1; }
  .note3d text { fill: #33006b; stroke: none; font-family: "Liberation Sans", sans-serif; font-weight: 700; }
  .gtools { position: relative; align-self: center; display: flex; margin-top: 7px; padding: 3px 2px; background: #f9fafb; border: 1px solid #9aa0a8; }
  .gtools button { width: 32px; height: 30px; position: relative; }
  .gtools .pressed { background: #dcdee1; outline: 1px solid #a5a9ae; outline-offset: -2px; }
  .gtools .menu::after { content: ""; position: absolute; right: 3px; bottom: 2px; border: 2px solid; border-color: transparent #555 #555 transparent; }
  .notes { position: relative; display: flex; justify-content: space-between; align-items: flex-end; padding: 0 57px 0 39px; font-family: "Liberation Sans", sans-serif; }
  .std { color: #33006b; font-size: 15px; line-height: 24px; margin-bottom: -3px; }
  .defs { color: #94979f; font-size: 13px; line-height: 14px; text-align: center; padding-bottom: 6px; }

  footer { position: relative; display: flex; align-items: center; height: 46px; border-top: 1px solid #b1b4b6; padding: 0 21px 0 7px; background: #f9fbfa; }
  footer > button { width: 30px; height: 30px; }
  footer .tog { width: 26px; margin-right: 2px; border: 1px solid #abaeb0; background: #dfe1e3; }
  .bar { height: 32px; border-left: 1px solid #abaeb0; margin-left: 8px; }
  .dbl { width: 4px; border-right: 1px solid #abaeb0; height: 38px; margin-left: 0; }
  .tight { margin-left: 0; height: 38px; }
  .fill { flex: 1; }
  footer .split { width: 38px; gap: 10px; margin: 0 6px; }
  footer .pick { margin-right: 119px; }
  .filter { width: 217px; }
</style>
